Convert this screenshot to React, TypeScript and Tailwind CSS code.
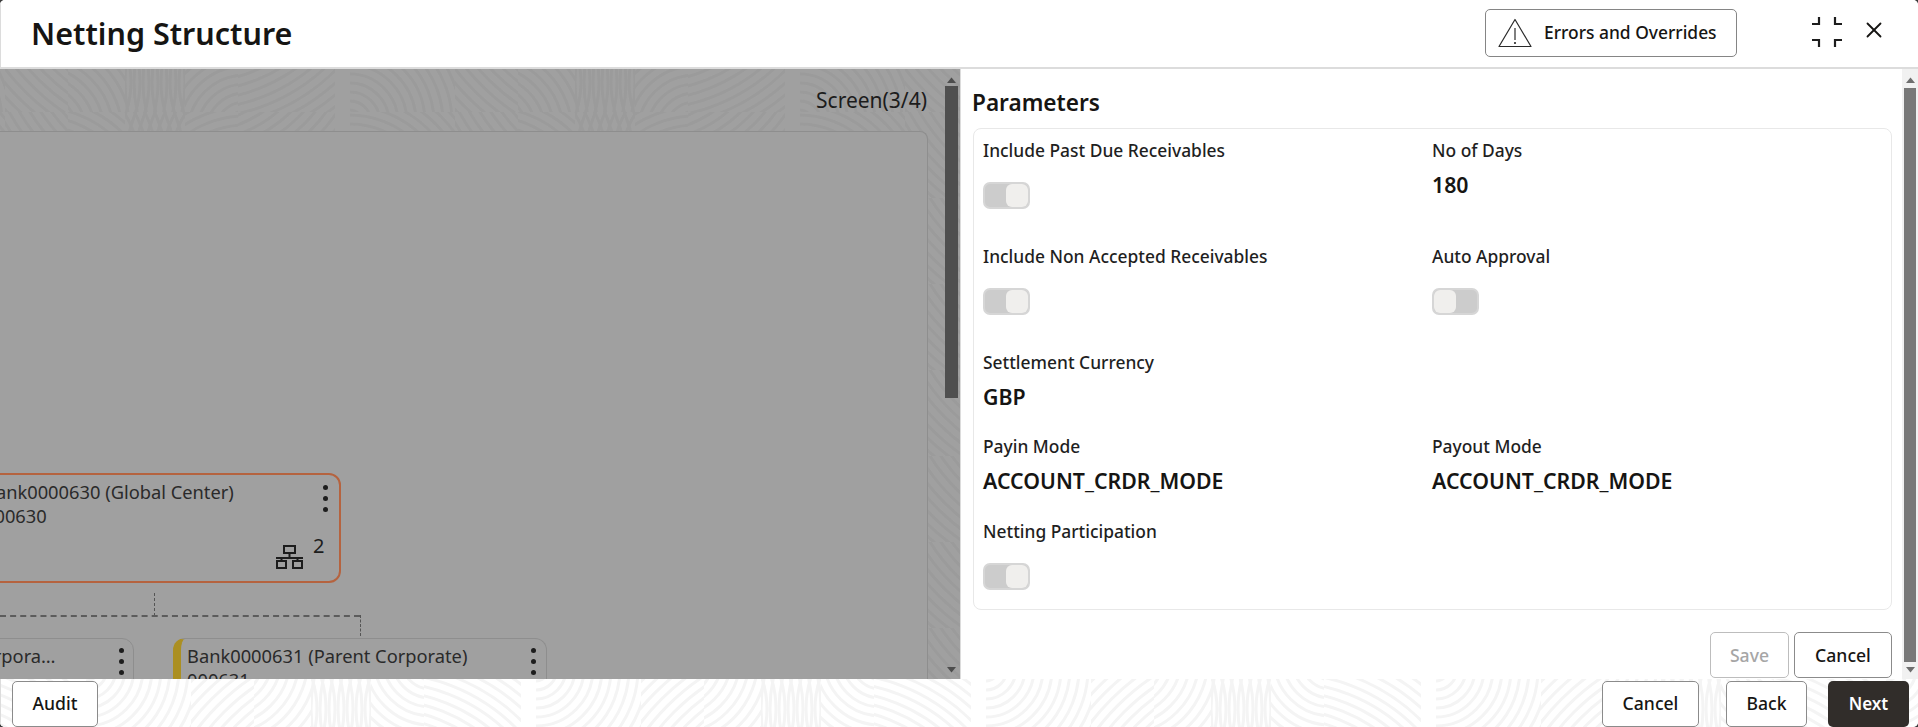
import { X } from "lucide-react";

const font = "font-['Noto_Sans',sans-serif]";

// one 450px repeat of the fingerprint texture
function Swirl({ id, color, x, y, flip }: { id: string; color: string; x: number; y: number; flip?: boolean }) {
  const rings = (start: number) => Array.from({ length: 30 }, (_, i) => start + i * 9);
  return (
    <svg className="absolute inset-0 h-full w-full" aria-hidden="true">
      <defs>
        <pattern id={id} width="450" height="86" patternUnits="userSpaceOnUse" patternTransform={`translate(${x} ${y}) scale(1 ${flip ? -1 : 1})`}>
          <g fill="none" stroke={color} strokeWidth="3">
            <svg x="0" y="0" width="105" height="86">
              {rings(12).map((r) => (
                <circle key={r} cx="0" cy="-10" r={r} />
              ))}
            </svg>
            <svg x="105" y="0" width="63" height="86">
              {rings(60).map((r) => (
                <circle key={r} cx="190" cy="190" r={r} />
              ))}
            </svg>
            <svg x="168" y="0" width="57" height="86">
              {rings(12).map((r) => (
                <circle key={r} cx="-30" cy="-20" r={r} />
              ))}
            </svg>
            <svg x="225" y="0" width="60" height="86">
              {rings(60).map((r) => (
                <circle key={r} cx="-90" cy="30" r={r} />
              ))}
              {rings(60).map((r) => (
                <circle key={r} cx="150" cy="30" r={r} />
              ))}
            </svg>
            <svg x="285" y="0" width="53" height="86">
              {rings(12).map((r) => (
                <circle key={r} cx="60" cy="-20" r={r} />
              ))}
            </svg>
            <svg x="338" y="0" width="97" height="86">
              {rings(60).map((r) => (
                <circle key={r} cx="-40" cy="180" r={r} />
              ))}
            </svg>
          </g>
        </pattern>
      </defs>
      <rect width="100%" height="100%" fill={`url(#${id})`} />
    </svg>
  );
}

function Kebab({ className }: { className: string }) {
  return (
    <div className={`absolute flex flex-col gap-[6px] ${className}`}>
      <span className="h-[5px] w-[5px] rounded-full bg-[#1d1d1d]" />
      <span className="h-[5px] w-[5px] rounded-full bg-[#1d1d1d]" />
      <span className="h-[5px] w-[5px] rounded-full bg-[#1d1d1d]" />
    </div>
  );
}

function Toggle({ on }: { on: boolean }) {
  return (
    <div className={`flex h-[27px] w-[47px] rounded-[7px] border-2 border-[#d6d6d6] bg-[#cccccc] ${on ? "justify-end" : "justify-start"}`}>
      <div className="h-[23px] w-[22px] rounded-[6px] bg-[#f0efed]" />
    </div>
  );
}

function Field({ label, value, on, className }: { label: string; value?: string; on?: boolean; className: string }) {
  return (
    <div className={className}>
      <div className="h-[22px] text-[17.4px] font-medium leading-[22px] text-[#1f1f1f]">{label}</div>
      {value && <div className="mt-[11px] text-[21.3px] font-semibold leading-[26px] text-[#161513]">{value}</div>}
      {on !== undefined && (
        <div className="mt-[21px]">
          <Toggle on={on} />
        </div>
      )}
    </div>
  );
}

function Btn({ children, className = "" }: { children: string; className?: string }) {
  return (
    <button className={`flex h-[46px] items-center justify-center rounded-[5px] border border-[#8b8b8b] bg-white text-[17.6px] font-medium text-[#161513] ${className}`}>
      {children}
    </button>
  );
}

function Arrow({ up, color }: { up: boolean; color: string }) {
  return (
    <svg width="9" height="6" viewBox="0 0 9 6" className="mx-auto">
      <path d={up ? "M4.5 0.5 9 6H0z" : "M0 0h9L4.5 5.5z"} fill={color} />
    </svg>
  );
}

function Network() {
  return (
    <svg width="27" height="25" viewBox="0 0 27 25" fill="none" stroke="#1d1d1d" strokeWidth="2" className="absolute left-[274px] top-[70px]">
      <rect x="8" y="1" width="11" height="7" />
      <path d="M13.5 8v5M0 13h27M5.5 13v3M21.5 13v3" />
      <rect x="1" y="16" width="9" height="7" />
      <rect x="17" y="16" width="9" height="7" />
    </svg>
  );
}

export default function App() {
  return (
    <div className={`h-[727px] w-[1918px] overflow-hidden bg-[#3c3c3c] ${font}`}>
      <div className="flex h-full flex-col overflow-hidden rounded-[5px] bg-white">
        {/* HEADER */}
        <header className="flex h-[69px] shrink-0 items-center border-b-2 border-l border-[#dcdcdc] bg-white pl-[30px] pr-[31px]">
          <h1 className="text-[30.5px] font-semibold leading-none text-[#161513]">Netting Structure</h1>
          <button className="ml-auto -mt-[2px] flex h-[48px] w-[252px] items-center rounded-[5px] border border-[#858585] pl-[12px] text-[17.4px] font-medium text-[#161513]">
            <svg width="34" height="30" viewBox="0 0 34 30" fill="none" stroke="#2a2a2a" strokeWidth="1.2" strokeLinejoin="round">
              <path d="M17 1.5 33 28.5H1z" />
              <path d="M17 10v12" />
              <circle cx="17" cy="25" r="0.5" />
            </svg>
            <span className="ml-[12px]">Errors and Overrides</span>
          </button>
          <svg width="30" height="30" viewBox="0 0 30 30" fill="none" stroke="#1d1d1d" strokeWidth="2.2" className="ml-[75px] -mt-[3px]">
            <path d="M7 0v7H0M23 0v7h7M7 30v-7H0M23 30v-7h7" />
          </svg>
          <X size={26} strokeWidth={1.7} className="ml-[19px] -mt-[7px] text-[#161513]" />
        </header>

        {/* BODY */}
        <div className="flex h-[610px] shrink-0">
          <section className="relative flex w-[960px] shrink-0 overflow-hidden bg-[#a0a0a0]">
            <Swirl id="swirl-left" color="#9b9b9b" x={-100} y={43} flip />
            <div className="relative flex min-w-0 flex-1 flex-col">
              <div className="h-[62px] pr-[2px] pt-[19px] text-right text-[21px] leading-[24px] text-[#1c1c1c]">Screen(3/4)</div>
              <div className="relative mr-[1px] flex-1 overflow-hidden rounded-tr-[8px] border-r border-t border-[#8e8e8e] bg-[#a0a0a0]">
                {/* DIAGRAM */}
                <div className="absolute -left-[40px] top-[341px] h-[110px] w-[381px] rounded-[12px] border-2 border-[#b5633f] text-[18.3px] leading-[24px] text-[#2a2a2a]">
                  <div className="pl-[22px] pt-[5px]">Bank0000630 (Global Center)</div>
                  <div className="pl-[22px]">000630</div>
                  <Kebab className="left-[361px] top-[10px]" />
                  <div className="absolute left-[40px] top-0 h-full w-[300px]">
                    <Network />
                    <span className="absolute left-[311px] top-[59px] text-[20px] text-[#1d1d1d]">2</span>
                  </div>
                </div>

                <div className="absolute left-[154px] top-[461px] h-[23px] border-l-[1.5px] border-dashed border-[#555555]" />
                <div className="absolute left-0 top-[483px] h-0 w-[360px] border-t-2 border-dashed border-[#5c5c5c]" />
                <div className="absolute left-[360px] top-[483px] h-[21px] border-l-[1.5px] border-dashed border-[#555555]" />

                <div className="absolute -left-[240px] top-[506px] h-[110px] w-[374px] rounded-[12px] border border-[#8e8e8e] text-[18.3px] leading-[24px] text-[#2a2a2a]">
                  <div className="pl-[14px] pt-[5px] whitespace-nowrap">Bank0000632 (Related Corpora…</div>
                  <Kebab className="left-[358px] top-[9px]" />
                </div>
                <div className="absolute left-[173px] top-[506px] h-[110px] w-[374px] rounded-[12px] border border-l-8 border-[#8e8e8e] border-l-[#ab8f22] text-[18.3px] leading-[24px] text-[#2a2a2a]">
                  <div className="pl-[6px] pt-[5px]">Bank0000631 (Parent Corporate)</div>
                  <div className="pl-[6px]">000631</div>
                  <Kebab className="left-[350px] top-[9px]" />
                </div>
              </div>
            </div>
            {/* left scrollbar */}
            <div className="relative ml-[16px] mr-[2px] flex w-[13px] shrink-0 flex-col pt-[8px]">
              <Arrow up color="#4d4d4d" />
              <div className="mt-[3px] h-[312px] bg-[#4f4f4f]" />
              <div className="mt-auto pb-[6px]">
                <Arrow up={false} color="#4d4d4d" />
              </div>
            </div>
          </section>

          <section className="flex min-w-0 flex-1 border-l border-[#dcdcdc] bg-white">
            <div className="min-w-0 flex-1 pl-[11px] pr-[10px]">
              <h2 className="pt-[21px] text-[22.6px] font-semibold leading-[26px] text-[#161513]">Parameters</h2>
              <div className="ml-[1px] mt-[12px] grid h-[482px] grid-cols-[449px_1fr] content-start rounded-[8px] border-[1.5px] border-[#e8e8e8] pl-[9px] pt-[10px]">
                <Field className="h-[106px]" label="Include Past Due Receivables" on />
                <Field className="h-[106px]" label="No of Days" value="180" />
                <Field className="h-[106px]" label="Include Non Accepted Receivables" on />
                <Field className="h-[106px]" label="Auto Approval" on={false} />
                <Field className="col-span-2 h-[84px]" label="Settlement Currency" value="GBP" />
                <Field className="h-[85px]" label="Payin Mode" value="ACCOUNT_CRDR_MODE" />
                <Field className="h-[85px]" label="Payout Mode" value="ACCOUNT_CRDR_MODE" />
                <Field className="col-span-2" label="Netting Participation" on />
              </div>
              <div className="mt-[22px] flex justify-end gap-[5px]">
                <Btn className="w-[79px] border-[#bdbdbd] text-[#a6a6a6]">Save</Btn>
                <Btn className="w-[98px]">Cancel</Btn>
              </div>
            </div>
            {/* right scrollbar */}
            <div className="flex w-[16px] shrink-0 flex-col bg-[#f1f1f1] px-[2px] pt-[8px]">
              <Arrow up color="#6e6e6e" />
              <div className="mt-[5px] h-[574px] bg-[#787878]" />
              <div className="mt-auto pb-[6px]">
                <Arrow up={false} color="#6e6e6e" />
              </div>
            </div>
          </section>
        </div>

        {/* FOOTER */}
        <footer className="relative flex h-[48px] shrink-0 items-center border-l border-[#dcdcdc] bg-white pl-[11px] pr-[9px] pt-[1px]">
          <Swirl id="swirl-foot" color="#f4f4f4" x={85} y={0} />
          <Btn className="relative w-[86px]">Audit</Btn>
          <div className="relative ml-auto flex gap-[27px]">
            <Btn className="w-[97px]">Cancel</Btn>
            <div className="flex gap-[21px]">
              <Btn className="w-[81px]">Back</Btn>
              <button className="flex h-[46px] w-[81px] items-center justify-center rounded-[5px] bg-[#312d2a] text-[17px] font-semibold text-white">Next</button>
            </div>
          </div>
        </footer>
      </div>
    </div>
  );
}
